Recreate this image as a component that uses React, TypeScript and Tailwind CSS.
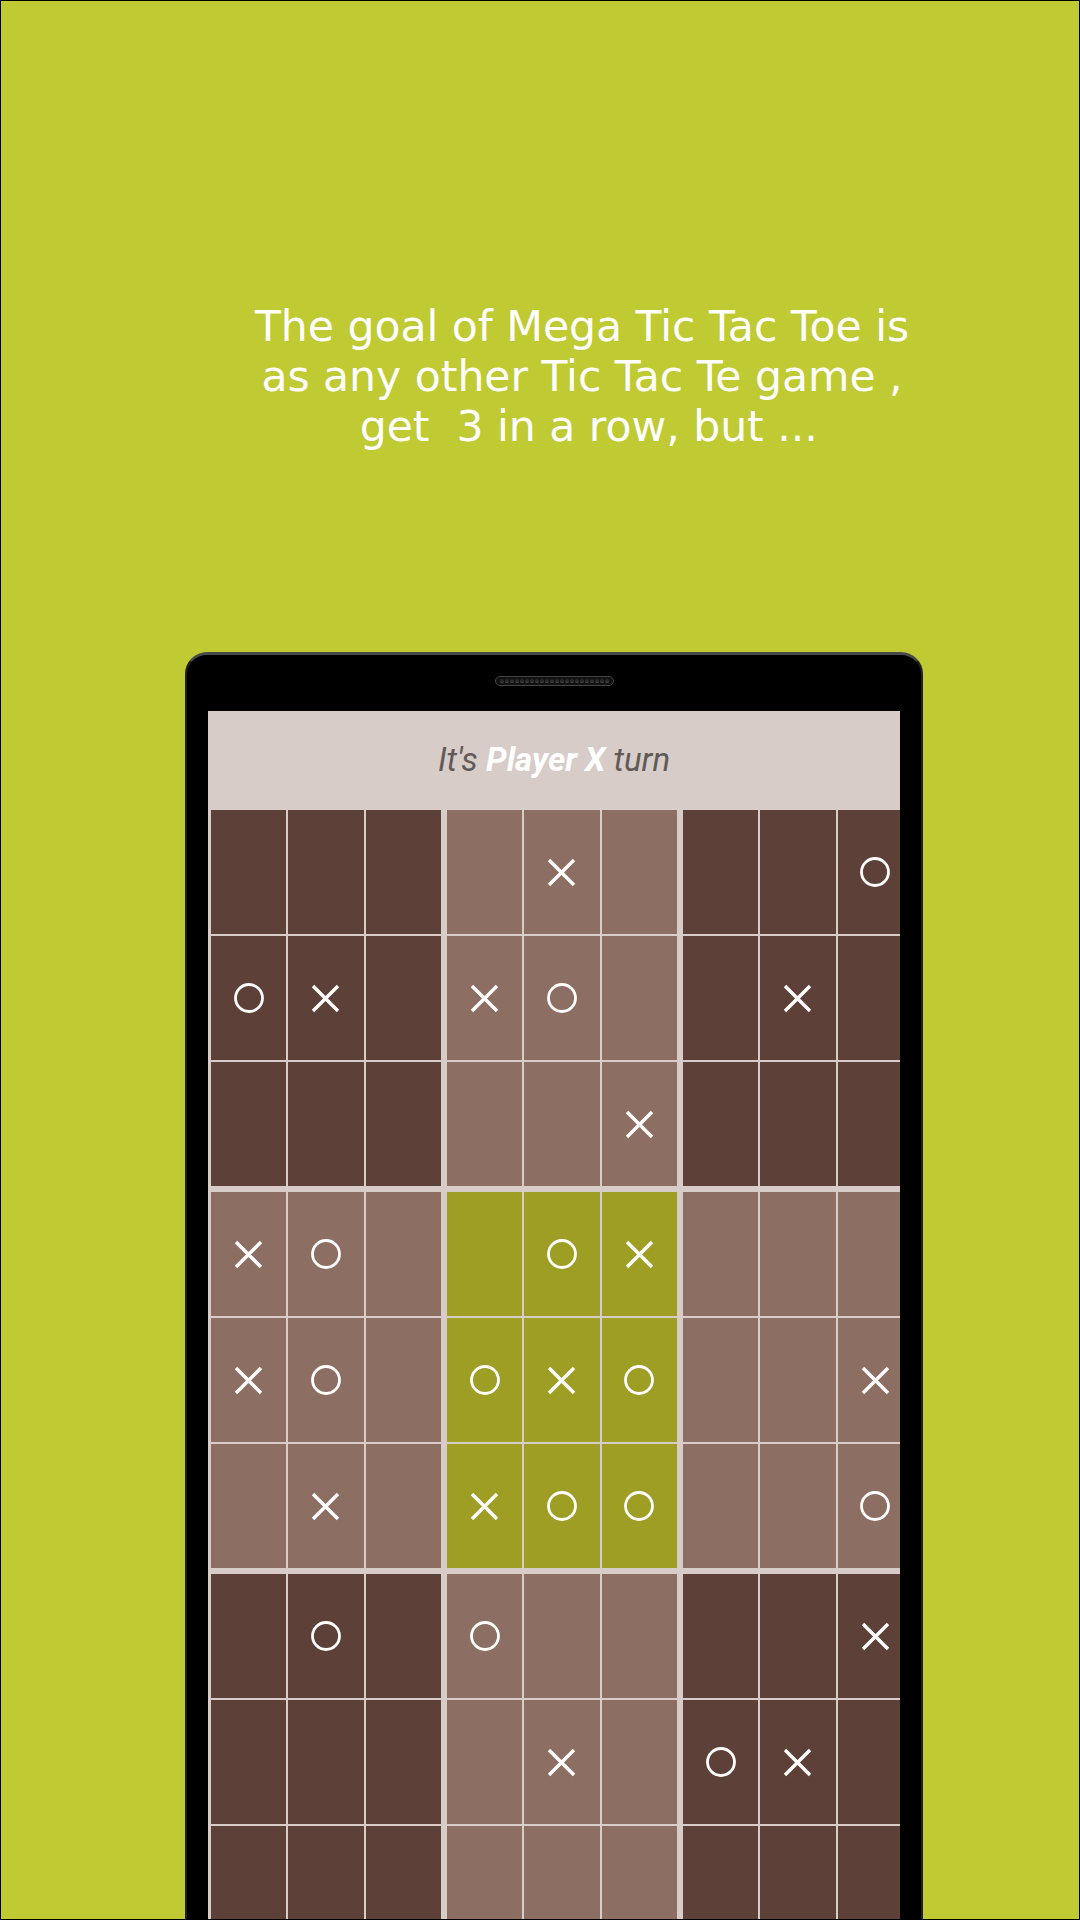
import React from "react";

const BOARD = [
  "....X...O",
  "OX.XO..X.",
  ".....X...",
  "XO..OX...",
  "XO.OXO..X",
  ".X.XOO..O",
  ".O.O....X",
  "....X.OX.",
  ".........",
];

function Cross() {
  return (
    <svg width="29" height="29" viewBox="0 0 29 29">
      <path d="M2 2 L27 27 M27 2 L2 27" stroke="#fff" strokeWidth="3.4" />
    </svg>
  );
}

function Nought() {
  return (
    <svg width="30" height="30" viewBox="0 0 30 30">
      <circle cx="15" cy="15" r="13.5" fill="none" stroke="#fff" strokeWidth="2.8" />
    </svg>
  );
}

function blockColor(br: number, bc: number) {
  if (br === 1 && bc === 1) return "bg-[#9e9d24]";
  return (br + bc) % 2 === 0 ? "bg-[#5d4037]" : "bg-[#8d6e63]";
}

function Block({ br, bc }: { br: number; bc: number }) {
  const cells = [];
  for (let r = 0; r < 3; r++) {
    for (let c = 0; c < 3; c++) {
      const v = BOARD[br * 3 + r][bc * 3 + c];
      cells.push(
        <div key={`${r}-${c}`} className={`${blockColor(br, bc)} flex items-center justify-center`}>
          {v === "X" && <Cross />}
          {v === "O" && <Nought />}
        </div>
      );
    }
  }
  return (
    <div className="w-[230px] shrink-0 grid grid-cols-3 grid-rows-[124px_124px_124px] gap-[2px]">
      {cells}
    </div>
  );
}

export default function App() {
  return (
    <div className="w-[1080px] h-[1920px] border border-black bg-[#c0ca33] overflow-hidden flex flex-col">
      {/* intro text */}
      <div
        className="pt-[301px] pl-[84px] text-white text-[42.5px] leading-[50px] text-center whitespace-pre"
        style={{ fontFamily: '"DejaVu Sans", sans-serif' }}
      >
        <div>The goal of Mega Tic Tac Toe is</div>
        <div>as any other Tic Tac Te game ,</div>
        <div> get  3 in a row, but ...</div>
      </div>

      {/* phone */}
      <div className="mt-[200px] ml-[184px] w-[738px] flex-1 bg-black rounded-t-[22px] border-t-[3px] border-x-[2px] border-t-[#4a4a4a] border-x-[#202020] px-[21px] pt-[21px] flex flex-col">
        <div className="mx-auto w-[119px] h-[10px] rounded-full border border-[#444] bg-[#111] flex items-center justify-center gap-[1px] overflow-hidden">
          {Array.from({ length: 22 }).map((_, i) => (
            <div key={i} className="w-[4px] h-[4px] rounded-full bg-[#2a2a2a] border-b border-[#4a4a4a]" />
          ))}
        </div>

        <div className="mt-[25px] flex-1 bg-[#d7ccc8] overflow-hidden">
          <div className="h-[98px] flex items-center justify-center text-[33px] italic text-[#615a58]" style={{ fontFamily: "Roboto, sans-serif" }}>
            <span>
              It's <span className="font-bold text-white">Player X</span> turn
            </span>
          </div>

          <div className="pt-[1px] pl-[3px] flex flex-col gap-[6px]">
            {[0, 1, 2].map((br) => (
              <div key={br} className="flex gap-[6px]">
                {[0, 1, 2].map((bc) => (
                  <Block key={bc} br={br} bc={bc} />
                ))}
              </div>
            ))}
          </div>
        </div>
      </div>
    </div>
  );
}
